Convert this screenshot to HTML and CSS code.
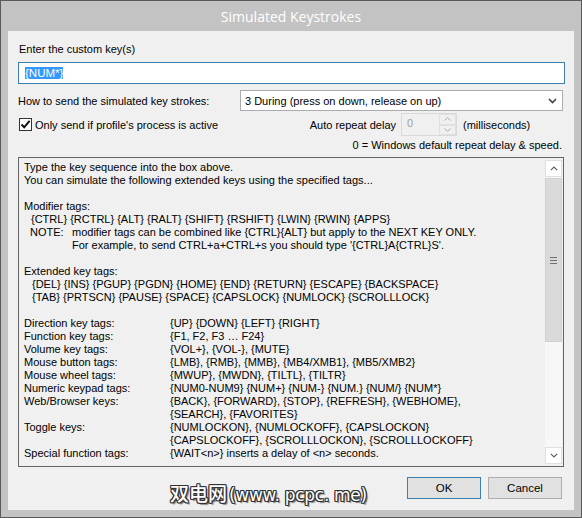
FILE: index.html
```html
<!DOCTYPE html>
<html>
<head>
<meta charset="utf-8">
<link rel="stylesheet" href="styles.css">
</head>
<body>
<div class="window">
  <div class="titlebar">Simulated Keystrokes</div>
  <div class="client">
    <div class="label-top">Enter the custom key(s)</div>
    <div class="textbox"><span class="sel">{NUM*}</span></div>
    <div class="row-send">
      <div class="lbl">How to send the simulated key strokes:</div>
      <div class="combo">
        <span class="combo-text">3 During (press on down, release on up)</span>
        <svg class="chev" width="9" height="6" viewBox="0 0 9 6"><polyline points="1,1 4.5,4.5 8,1" fill="none" stroke="#404040" stroke-width="1.6"/></svg>
      </div>
    </div>
    <div class="row-opts">
      <div class="opt-left">
        <div class="check">
          <span class="box"><svg width="11" height="11" viewBox="0 0 11 11"><path d="M1.5 5.5 L4.2 8.3 L9.6 1.8" fill="none" stroke="#111" stroke-width="2"/></svg></span>
          <span>Only send if profile's process is active</span>
        </div>
        <span class="delay-lbl">Auto repeat delay</span>
      </div>
      <div class="spin">
        <span class="spin-val">0</span>
        <div class="spin-btns">
          <span class="sb"><svg width="7" height="4" viewBox="0 0 7 4"><polyline points="0.5,3.5 3.5,0.7 6.5,3.5" fill="none" stroke="#a8a8a8" stroke-width="1"/></svg></span>
          <span class="sb"><svg width="7" height="4" viewBox="0 0 7 4"><polyline points="0.5,0.5 3.5,3.3 6.5,0.5" fill="none" stroke="#a8a8a8" stroke-width="1"/></svg></span>
        </div>
      </div>
      <span class="ms">(milliseconds)</span>
    </div>
    <div class="hint">0 = Windows default repeat delay &amp; speed.</div>
    <div class="panel">
      <div class="help">
        <div>Type the key sequence into the box above.</div>
        <div>You can simulate the following extended keys using the specified tags...</div>
        <div class="blank"></div>
        <div>Modifier tags:</div>
        <div class="ind">{CTRL} {RCTRL} {ALT} {RALT} {SHIFT} {RSHIFT} {LWIN} {RWIN} {APPS}</div>
        <div class="note"><span class="note-k">NOTE:</span><span>modifier tags can be combined like {CTRL}{ALT} but apply to the NEXT KEY ONLY.</span></div>
        <div class="note2">For example, to send CTRL+a+CTRL+s you should type '{CTRL}A{CTRL}S'.</div>
        <div class="blank"></div>
        <div>Extended key tags:</div>
        <div class="ind2">{DEL} {INS} {PGUP} {PGDN} {HOME} {END} {RETURN} {ESCAPE} {BACKSPACE}</div>
        <div class="ind2">{TAB} {PRTSCN} {PAUSE} {SPACE} {CAPSLOCK} {NUMLOCK} {SCROLLLOCK}</div>
        <div class="blank"></div>
        <div class="tags">
          <span>Direction key tags:</span><span>{UP} {DOWN} {LEFT} {RIGHT}</span>
          <span>Function key tags:</span><span>{F1, F2, F3 … F24}</span>
          <span>Volume key tags:</span><span>{VOL+}, {VOL-}, {MUTE}</span>
          <span>Mouse button tags:</span><span>{LMB}, {RMB}, {MMB}, {MB4/XMB1}, {MB5/XMB2}</span>
          <span>Mouse wheel tags:</span><span>{MWUP}, {MWDN}, {TILTL}, {TILTR}</span>
          <span>Numeric keypad tags:</span><span>{NUM0-NUM9} {NUM+} {NUM-} {NUM.} {NUM/} {NUM*}</span>
          <span>Web/Browser keys:</span><span>{BACK}, {FORWARD}, {STOP}, {REFRESH}, {WEBHOME},</span>
          <span></span><span>{SEARCH}, {FAVORITES}</span>
          <span>Toggle keys:</span><span>{NUMLOCKON}, {NUMLOCKOFF}, {CAPSLOCKON}</span>
          <span></span><span>{CAPSLOCKOFF}, {SCROLLLOCKON}, {SCROLLLOCKOFF}</span>
          <span>Special function tags:</span><span>{WAIT&lt;n&gt;} inserts a delay of &lt;n&gt; seconds.</span>
        </div>
      </div>
      <div class="scrollbar">
        <div class="arrow"><svg width="8" height="5" viewBox="0 0 8 5"><polyline points="0.8,4.2 4,1 7.2,4.2" fill="none" stroke="#606060" stroke-width="1.2"/></svg></div>
        <div class="thumb"><span class="grip"></span></div>
        <div class="track"></div>
        <div class="arrow"><svg width="8" height="5" viewBox="0 0 8 5"><polyline points="0.8,0.8 4,4 7.2,0.8" fill="none" stroke="#606060" stroke-width="1.2"/></svg></div>
      </div>
    </div>
    <div class="buttons">
      <button class="btn default">OK</button>
      <button class="btn">Cancel</button>
    </div>
    <div class="watermark"><span class="wm-cjk">双电网</span><span class="wm-lat">(www. pcpc. me)</span></div>
  </div>
</div>
</body>
</html>
```

FILE: styles.css
```css
html, body {
  margin: 0;
  padding: 0;
  background: #c3c3c3;
}

.window {
  width: 582px;
  height: 518px;
  box-sizing: border-box;
  border: 1px solid #5a5a5a;
  background: #c3c3c3;
  display: flex;
  flex-direction: column;
}

.titlebar {
  height: 30px;
  flex: none;
  display: flex;
  align-items: center;
  justify-content: center;
  color: #ffffff;
  font-family: "Open Sans", sans-serif;
  font-size: 14px;
  padding-top: 1px;
  box-sizing: border-box;
}

.client {
  flex: 1;
  margin: 0 7px 7px 7px;
  background: #f0f0f0;
  padding: 10px 9px 0 10px;
  position: relative;
  font-family: "Liberation Sans", Arial, sans-serif;
  font-size: 11px;
  color: #000;
}

.label-top {
  line-height: 16px;
  height: 16px;
  padding-left: 1px;
}

.textbox {
  margin-top: 5px;
  height: 22px;
  box-sizing: border-box;
  border: 1px solid #3c7fb1;
  background: #fff;
  padding-left: 6px;
  display: flex;
  align-items: center;
  font-size: 11.5px;
}

.sel {
  background: #3399ff;
  color: #fff;
  line-height: 12px;
}

.row-send {
  margin-top: 6px;
  height: 21px;
  display: flex;
  align-items: center;
}

.lbl {
  width: 222px;
  flex: none;
}

.combo {
  width: 323px;
  height: 21px;
  box-sizing: border-box;
  border: 1px solid #acacac;
  background: #fff;
  display: flex;
  align-items: center;
  justify-content: space-between;
  padding: 0 5px 0 4px;
}

.chev {
  display: block;
}

.row-opts {
  margin-top: 2px;
  height: 23px;
  display: flex;
  align-items: center;
}

.opt-left {
  width: 383px;
  flex: none;
  box-sizing: border-box;
  padding: 0 5px 0 1px;
  display: flex;
  justify-content: space-between;
  align-items: center;
}

.check {
  display: flex;
  align-items: center;
  gap: 3px;
}

.box {
  width: 13px;
  height: 13px;
  box-sizing: border-box;
  border: 1px solid #333;
  background: #fff;
  display: flex;
  align-items: center;
  justify-content: center;
}

.box svg {
  display: block;
}

.spin {
  width: 56px;
  height: 23px;
  flex: none;
  box-sizing: border-box;
  border: 1px solid #d9d9d9;
  background: #f0f0f0;
  display: flex;
  justify-content: space-between;
  padding: 0 0 0 5px;
}

.spin-val {
  color: #a0a0a0;
  line-height: 19px;
}

.spin-btns {
  width: 17px;
  display: flex;
  flex-direction: column;
}

.sb {
  flex: 1;
  border: 1px solid #e0e0e0;
  background: #f0f0f0;
  display: flex;
  align-items: center;
  justify-content: center;
}

.sb svg {
  display: block;
}

.ms {
  padding-left: 6px;
}

.hint {
  margin-top: 2px;
  line-height: 14px;
  text-align: right;
  padding-right: 3px;
}

.panel {
  margin-top: 5px;
  width: 546px;
  height: 310px;
  box-sizing: border-box;
  border: 1px solid #646464;
  display: flex;
}

.help {
  flex: 1;
  padding: 3px 0 0 5px;
  line-height: 13px;
  white-space: nowrap;
}

.blank {
  height: 13px;
}

.ind {
  padding-left: 7px;
}

.ind2 {
  padding-left: 8px;
}

.note {
  display: flex;
  padding-left: 6px;
}

.note-k {
  width: 42px;
  flex: none;
}

.note2 {
  padding-left: 48px;
}

.tags {
  display: grid;
  grid-template-columns: 146px 1fr;
}

.scrollbar {
  width: 17px;
  flex: none;
  margin: 2px 1px 2px 0;
  display: flex;
  flex-direction: column;
  background: #f7f7f7;
}

.arrow {
  height: 17px;
  flex: none;
  box-sizing: border-box;
  border: 1px solid #e0e0e0;
  background: #fff;
  display: flex;
  align-items: center;
  justify-content: center;
}

.thumb {
  height: 164px;
  flex: none;
  margin-top: 1px;
  box-sizing: border-box;
  background: #dadada;
  border: 1px solid #d0d0d0;
  display: flex;
  align-items: center;
  justify-content: center;
}

.grip {
  width: 7px;
  height: 5px;
  border-top: 1px solid #707070;
  border-bottom: 1px solid #707070;
  background: linear-gradient(#dadada 0 2px, #707070 2px 3px, #dadada 3px);
}

.track {
  flex: 1;
}

.buttons {
  margin-top: 10px;
  display: flex;
  justify-content: flex-end;
  gap: 7px;
  padding-right: 3px;
}

.btn {
  width: 74px;
  height: 22px;
  box-sizing: border-box;
  border: 1px solid #adadad;
  background: #e1e1e1;
  font-family: "Liberation Sans", Arial, sans-serif;
  font-size: 11.5px;
  color: #000;
  padding: 0;
  margin: 0;
}

.btn.default {
  border-color: #3c7fb1;
}

.watermark {
  position: absolute;
  left: 162px;
  top: 450px;
  line-height: 24px;
  color: #fff;
  white-space: nowrap;
  text-shadow: 1px 0 0 #333, -1px 0 0 #333, 0 1px 0 #333, 0 -1px 0 #333, 1px 1px 0 #333, -1px -1px 0 #333, 1px -1px 0 #333, -1px 1px 0 #333, 2px 2px 1px rgba(0,0,0,0.5);
}

.wm-cjk {
  font-family: "Noto Sans CJK SC", sans-serif;
  font-size: 19px;
  font-weight: 500;
}

.wm-lat {
  font-family: "DejaVu Sans", sans-serif;
  font-size: 17px;
  padding-left: 2px;
  letter-spacing: -0.3px;
}
```
